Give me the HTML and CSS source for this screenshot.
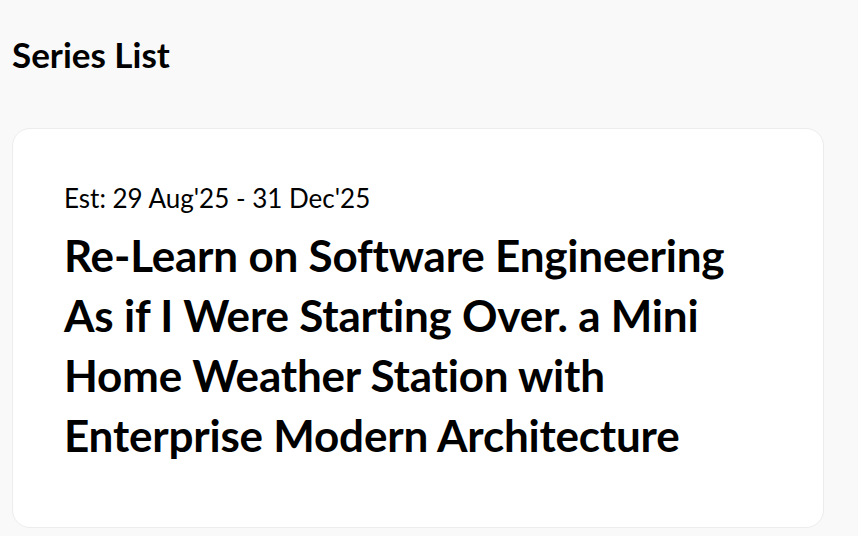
FILE: index.html
```html
<!DOCTYPE html>
<html lang="en">
<head>
<meta charset="utf-8">
<title>Series List</title>
<link rel="stylesheet" href="styles.css">
</head>
<body>
<main class="page">
  <h1 class="page-title">Series List</h1>
  <section class="series-list">
    <article class="series-card">
      <p class="series-date">Est: 29 Aug'25 - 31 Dec'25</p>
      <h2 class="series-title">Re-Learn on Software Engineering As if I Were Starting Over. a Mini Home Weather Station with Enterprise Modern Architecture</h2>
    </article>
  </section>
</main>
</body>
</html>
```

FILE: styles.css
```css
html, body {
  margin: 0;
  padding: 0;
  background: #f9f9f9;
}
body {
  font-family: Lato, "Liberation Sans", sans-serif;
  color: #000;
}
.page {
  padding: 34px 12px 0 12px;
}
.page-title {
  margin: 0;
  font-size: 35px;
  line-height: 40px;
  font-weight: 700;
}
.series-list {
  margin-top: 54px;
}
.series-card {
  width: 812px;
  box-sizing: border-box;
  background: #fff;
  border: 1.5px solid #ececec;
  border-radius: 18px;
  padding: 53px 50px 62px 51px;
}
.series-date {
  margin: 0;
  font-size: 26px;
  line-height: 32px;
}
.series-title {
  margin: 11px 0 0 0;
  width: 700px;
  font-size: 44px;
  line-height: 60px;
  font-weight: 700;
  letter-spacing: -0.2px;
}
```
